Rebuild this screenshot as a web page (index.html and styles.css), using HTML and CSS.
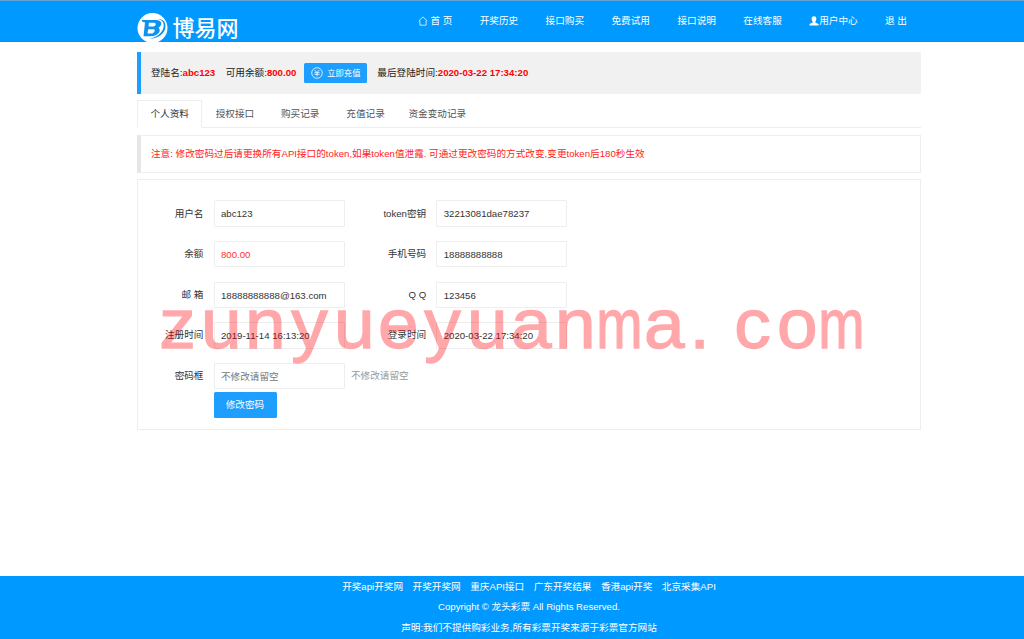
FILE: index.html
```html
<!DOCTYPE html>
<html lang="zh-CN">
<head>
<meta charset="utf-8">
<title>博易网</title>
<link rel="stylesheet" href="styles.css">
</head>
<body>
<header class="header">
  <div class="container header-inner">
    <div class="logo">
      <svg class="logo-mark" width="32" height="29" viewBox="0 0 32 29">
        <circle cx="15.5" cy="15" r="15" fill="#fff"/>
        <path d="M5 7H18.500C26 7 25.500 12.500 21.500 14.800C25 17.500 21 23.200 14 23.200H6.500L8 9.500L5 8.500Z" fill="#0b93ee"/>
        <path d="M12 9.800H17.500Q20.500 11 17 13.600H11.500ZM11.200 16.200H17Q19 17.500 15.500 20.500H10.500Z" fill="#fff"/>
        <path d="M21 6C26 7 28 11 26 16C24 21 19 24.500 12 25.800C22 25.500 28.500 20 28.500 13C28.500 8.500 25.500 6 21 6Z" fill="#0b93ee"/>
      </svg>
      <span class="logo-text">博易网</span>
    </div>
    <nav class="nav">
      <a><svg class="home" viewBox="0 0 10 10"><path d="M.7 5L5 .9L9.300 5M1.900 4.500V9.200H8.100V4.500" fill="none" stroke="#fff" stroke-width=".75"/></svg>首 页</a>
      <a>开奖历史</a><a>接口购买</a><a>免费试用</a><a>接口说明</a><a>在线客服</a>
      <a><svg class="user" viewBox="0 0 10 10"><path d="M5 .3C7 .3 7.600 1.600 7.300 3.500C7.100 4.800 6.300 5.300 6.300 6.400L9.500 8V9.500H.5V8L3.700 6.400C3.700 5.300 2.900 4.800 2.700 3.500C2.400 1.600 3 .3 5 .3Z" fill="#fff"/></svg>用户中心</a>
      <a>退 出</a>
    </nav>
  </div>
</header>
<main class="container main">
  <section class="account">
    <span>登陆名:<b>abc123</b></span>
    <span class="balance">可用余额:<b>800.00</b></span>
    <button class="btn recharge"><svg viewBox="0 0 12 12"><g fill="none" stroke="#fff" stroke-width=".8"><circle cx="6" cy="6" r="5.300"/><path d="M3.700 3L6 5.600L8.300 3M3.500 5.700H8.500M3.500 7.300H8.500M6 5.600V9.300"/></g></svg>立即充值</button>
    <span class="last">最后登陆时间:<b>2020-03-22 17:34:20</b></span>
  </section>
  <nav class="tabs">
    <a class="tab active">个人资料</a><a class="tab">授权接口</a><a class="tab">购买记录</a><a class="tab">充值记录</a><a class="tab">资金变动记录</a>
  </nav>
  <section class="notice">注意: 修改密码过后请更换所有API接口的token,如果token值泄露. 可通过更改密码的方式改变,变更token后180秒生效</section>
  <section class="panel">
    <div class="form">
      <label>用户名</label><div class="field">abc123</div>
      <label>token密钥</label><div class="field">32213081dae78237</div>
      <label>余额</label><div class="field red">800.00</div>
      <label>手机号码</label><div class="field">18888888888</div>
      <label>邮 箱</label><div class="field">18888888888@163.com</div>
      <label>Q Q</label><div class="field">123456</div>
      <label>注册时间</label><div class="field">2019-11-14 16:13:20</div>
      <label>登录时间</label><div class="field">2020-03-22 17:34:20</div>
      <label>密码框</label><div class="field placeholder">不修改请留空</div>
      <span class="hint">不修改请留空</span>
    </div>
    <button class="btn submit">修改密码</button>
  </section>
</main>
<footer class="footer">
  <div class="links"><a>开奖api开奖网</a><a>开奖开奖网</a><a>重庆API接口</a><a>广东开奖结果</a><a>香港api开奖</a><a>北京采集API</a></div>
  <div>Copyright © 龙头彩票 All Rights Reserved.</div>
  <div>声明:我们不提供购彩业务,所有彩票开奖来源于彩票官方网站</div>
</footer>
<div class="watermark"><span>z</span><span>u</span><span>n</span><span>y</span><span>u</span><span>e</span><span>y</span><span>u</span><span>a</span><span>n</span><span class="narrow">m</span><span>a</span><span class="dot">.</span><span>c</span><span>o</span><span class="narrow">m</span></div>
</body>
</html>
```
FILE: styles.css
```css
* { box-sizing: border-box; }
body {
  margin: 0;
  height: 639px;
  overflow: hidden;
  position: relative;
  display: flex;
  flex-direction: column;
  background: #fff;
  color: #333;
  font: 9.65px/16px "Liberation Sans", "Noto Sans CJK SC", sans-serif;
  white-space: nowrap;
}
.container { width: 784px; margin-left: 137px; }
.header {
  height: 42px;
  background: #0099ff;
  border-top: 1px solid #62a5d3;
  border-bottom: 1px solid #3587c4;
}
.header-inner { display: flex; justify-content: space-between; }
.logo { display: flex; height: 40px; padding-top: 12px; }
.logo-mark { display: block; flex: none; }
.logo-text {
  margin-left: 3.5px;
  color: #fff;
  font-size: 22px;
  font-weight: 500;
  line-height: 31px;
}
.nav { display: flex; gap: 27.4px; padding: 12px 14px 0 0; color: #fff; }
.nav a { display: flex; align-items: center; height: 16px; }
.home { width: 10px; height: 10px; margin-right: 2px; }
.user { width: 10px; height: 10px; }
.main { flex: 1; padding-top: 10px; }
.account {
  display: flex;
  align-items: center;
  height: 41.5px;
  padding-left: 10px;
  background: #f1f1f1;
  border-left: 4px solid #1e9fff;
  border-radius: 0 2px 2px 0;
  color: #222;
}
.account b { color: #f00; }
.balance { margin-left: 10.5px; }
.btn {
  display: flex;
  align-items: center;
  justify-content: center;
  padding: 0;
  border: 0;
  border-radius: 1.5px;
  background: #1e9fff;
  color: #fff;
  font: inherit;
}
.recharge { width: 63px; height: 20.5px; margin: 0 10px 0 8px; font-size: 8.3px; }
.recharge svg { width: 12px; height: 12px; margin-right: 4px; }
.tabs { display: flex; height: 28px; margin-top: 6.5px; border-bottom: 1px solid #eee; }
.tab {
  height: 28px;
  min-width: 65.3px;
  padding: 0 10.3px;
  line-height: 28px;
  text-align: center;
  color: #555;
}
.tab.active {
  border: 1px solid #eee;
  border-bottom-color: #fff;
  border-radius: 1px 1px 0 0;
  line-height: 26px;
  color: #333;
}
.notice {
  height: 38px;
  margin-top: 7px;
  padding-left: 10px;
  border: 1px solid #eee;
  border-left: 4px solid #e6e6e6;
  line-height: 36px;
  color: #ff2222;
}
.panel { height: 251px; margin-top: 6px; padding: 20.4px 0 0 15.5px; border: 1px solid #eee; }
.form {
  display: grid;
  grid-template-columns: 60px 131px 91.7px 131px;
  grid-auto-rows: 26.5px;
  row-gap: 14.1px;
  align-items: center;
}
.form label { padding-right: 10px; text-align: right; }
.field {
  height: 26.5px;
  padding-left: 6.5px;
  border: 1px solid #eee;
  border-radius: 1px;
  line-height: 25px;
}
.red { color: #ff3030; }
.placeholder { color: #777; }
.hint { padding-left: 6.5px; color: #999; }
.submit { width: 63px; height: 26px; margin: 2.8px 0 0 60px; }
.footer {
  height: 63.5px;
  padding: 1px 0 0 34px;
  background: #0099ff;
  color: #fff;
  text-align: center;
  line-height: 20.6px;
}
.links { display: flex; justify-content: center; gap: 9.5px; }
.watermark {
  position: absolute;
  left: 154.8px;
  top: 284px;
  display: grid;
  grid-template-columns: repeat(16, 44.3px);
  justify-items: center;
  color: #ff0008;
  opacity: .34;
  font-size: 69.5px;
  line-height: 80px;
  -webkit-text-stroke: 1.3px #ff0008;
  pointer-events: none;
}
.watermark span { transform: scaleX(1.05); }
.watermark .narrow { width: 59px; margin: 0 -7.35px; text-align: center; transform: scaleX(.8); }
.watermark .dot { margin-right: 18px; }
```
